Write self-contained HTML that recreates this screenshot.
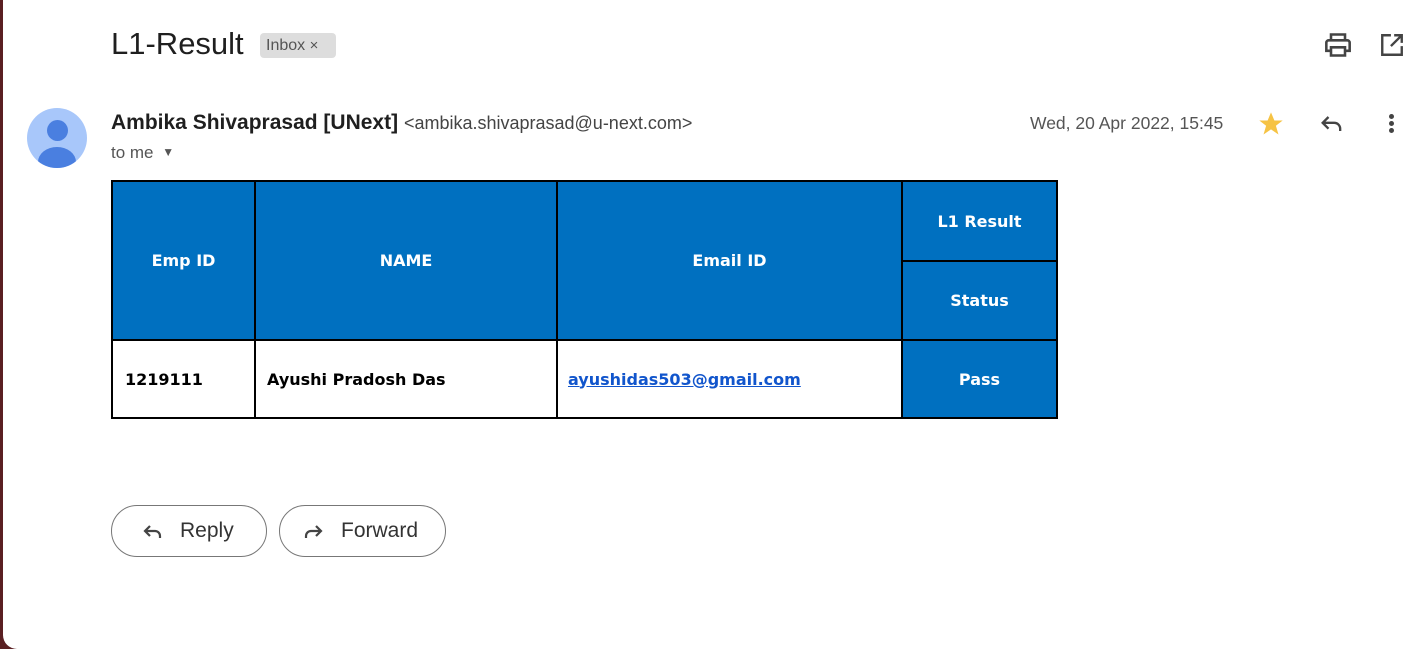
<!DOCTYPE html>
<html><head><style>
html,body{margin:0;padding:0;width:1427px;height:649px;overflow:hidden;background:#5a1f22;font-family:"Liberation Sans",Arial,sans-serif;}
.page{position:absolute;left:3px;top:0;width:1424px;height:649px;background:#fff;border-bottom-left-radius:14px;}
.abs{position:absolute;}
.title{left:108px;top:26px;font-size:31px;color:#1f1f1f;}
.chip{left:257px;top:33px;width:76px;height:25px;background:#ddd;border-radius:4px;font-size:16px;color:#555;line-height:25px;padding-left:6px;box-sizing:border-box;}
.avatar{left:24px;top:108px;width:60px;height:60px;border-radius:50%;background:#a8c7fa;overflow:hidden;}
.name{left:108px;top:111px;font-size:21px;font-weight:bold;color:#1f1f1f;}
.name span{font-weight:normal;font-size:18px;color:#444;}
.tome{left:108px;top:143px;font-size:17px;color:#555;}
.date{left:1027px;top:113px;font-size:17.5px;color:#555;}
table{position:absolute;left:108px;top:180px;border-collapse:collapse;font-family:"DejaVu Sans",sans-serif;font-size:16px;font-weight:bold;}
td{border:2px solid #000;padding:0;}
.h{background:#0070c0;color:#fff;text-align:center;}
.btn{height:52px;border:1px solid #777;border-radius:27px;box-sizing:border-box;font-size:21px;color:#333;line-height:50px;}
</style></head><body><div class="page">
<div class="abs title">L1-Result</div>
<div class="abs chip">Inbox <span style="font-size:15px">×</span></div>
<svg class="abs" style="left:1321px;top:31px" width="28" height="28" viewBox="0 0 24 24"><path d="M6 8V3h12v5M4 8h16a2 2 0 0 1 2 2v7h-4M6 17H2v-7a2 2 0 0 1 2-2M6 14h12v7H6z" fill="none" stroke="#444" stroke-width="2.2"/></svg>
<svg class="abs" style="left:1376px;top:32px" width="26" height="26" viewBox="0 0 24 24"><path d="M11 3H3v18h18v-8M14 3h7v7M21 3L11 13" fill="none" stroke="#444" stroke-width="2.2"/></svg>
<div class="abs avatar"><div class="abs" style="left:20px;top:12px;width:21px;height:21px;border-radius:50%;background:#4a7fe0"></div><div class="abs" style="left:11px;top:39px;width:38px;height:30px;border-radius:50%;background:#4a7fe0"></div></div>
<div class="abs name">Ambika Shivaprasad [UNext] <span>&lt;ambika.shivaprasad@u-next.com&gt;</span></div>
<div class="abs tome">to me <span style="font-size:12px;position:relative;top:-2px;left:4px">▼</span></div>
<div class="abs date">Wed, 20 Apr 2022, 15:45</div>
<svg class="abs" style="left:1254px;top:110px" width="28" height="28" viewBox="0 0 24 24"><path d="M12 2l2.9 7h7.1l-5.8 4.5 2.2 7.5L12 16.6 5.6 21l2.2-7.5L2 9h7.1z" fill="#f6c344"/></svg>
<svg class="abs" style="left:1315px;top:110px" width="28" height="28" viewBox="0 0 24 24"><path d="M9 6L4 11l5 5M4 11h10a5 5 0 0 1 5 5v2" fill="none" stroke="#444" stroke-width="2"/></svg>
<div class="abs" style="left:1386px;top:114px;width:5px;height:5px;border-radius:50%;background:#444;box-shadow:0 7px 0 #444,0 14px 0 #444"></div>
<table>
<tr style="height:80px"><td class="h" rowspan="2" style="width:141px">Emp ID</td><td class="h" rowspan="2" style="width:300px">NAME</td><td class="h" rowspan="2" style="width:343px">Email ID</td><td class="h" style="width:153px">L1 Result</td></tr>
<tr style="height:79px"><td class="h">Status</td></tr>
<tr style="height:78px"><td style="padding-left:12px">1219111</td><td style="padding-left:11px">Ayushi Pradosh Das</td><td style="padding-left:10px"><span style="color:#1155cc;text-decoration:underline">ayushidas503@gmail.com</span></td><td class="h">Pass</td></tr>
</table>
<div class="abs btn" style="left:108px;top:505px;width:156px;"><svg class="abs" style="left:29px;top:14px" width="24" height="24" viewBox="0 0 24 24"><path d="M9 6L4 11l5 5M4 11h10a5 5 0 0 1 5 5v2" fill="none" stroke="#444" stroke-width="2.2"/></svg><span style="position:absolute;left:68px">Reply</span></div>
<div class="abs btn" style="left:276px;top:505px;width:167px;"><svg class="abs" style="left:21px;top:14px" width="24" height="24" viewBox="0 0 24 24"><path d="M15 6l5 5-5 5M20 11H10a5 5 0 0 0-5 5v2" fill="none" stroke="#444" stroke-width="2.2"/></svg><span style="position:absolute;left:61px">Forward</span></div>
</div></body></html>
